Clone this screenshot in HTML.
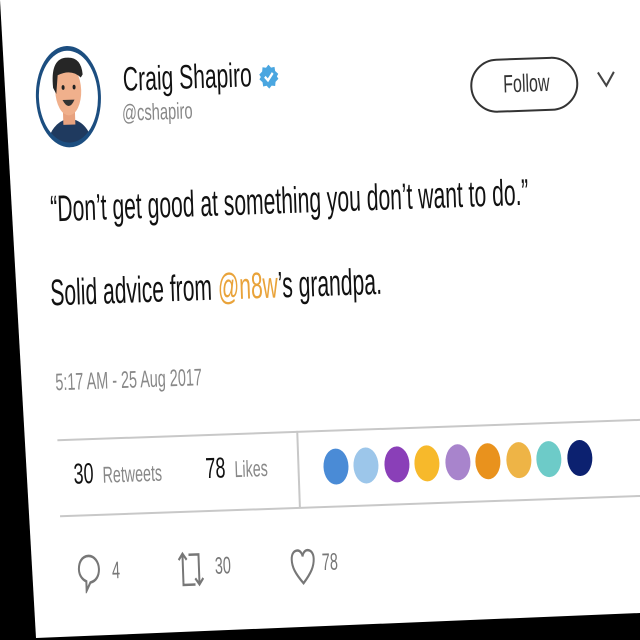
<!DOCTYPE html>
<html><head><meta charset="utf-8"><style>
*{margin:0;padding:0;box-sizing:border-box}
html,body{width:640px;height:640px;overflow:hidden;background:#000}
.card{position:absolute;left:0;top:0;width:640px;height:640px;background:#fff;clip-path:polygon(0 0,640px 0,640px 613px,36px 638px)}
.c{position:absolute;left:0;top:0;width:700px;height:640px;transform:rotate(-2deg);transform-origin:0 0;font-family:"Liberation Sans",sans-serif}
.t{position:absolute;white-space:nowrap;transform-origin:0 50%}
.line{position:absolute;height:2px;background:#c8c8c8}
.dot{position:absolute;width:25px;height:36px;border-radius:50%}
</style></head><body>
<div class="card"><div class="c">
<svg style="position:absolute;left:31px;top:46px" width="68" height="106" viewBox="0 0 68 68" preserveAspectRatio="none">
<defs><clipPath id="cc"><circle cx="34" cy="34" r="30"/></clipPath></defs>
<circle cx="34" cy="34" r="31" fill="#fff"/>
<g clip-path="url(#cc)">
<path d="M10 68 Q14 50 34 48 Q54 50 58 68Z" fill="#1f3a5f"/>
<rect x="28" y="40" width="12" height="12" fill="#e8a27f"/>
<ellipse cx="34" cy="30" rx="13" ry="16" fill="#f0b08c"/>
<path d="M19 28 Q17 10 32 9 Q48 8 49 20 L47 22 Q38 16 24 20 L22 32Z" fill="#262626"/>
<path d="M28 36 Q34 44 40 36Z" fill="#333"/>
<circle cx="29" cy="28" r="1.5" fill="#222"/><circle cx="40" cy="28" r="1.5" fill="#222"/>
</g>
<circle cx="34" cy="34" r="31" fill="none" stroke="#1c4e80" stroke-width="3"/>
</svg>
<div class="t" style="left:120px;top:66px;font-size:34px;line-height:36px;color:#111;transform:scaleX(.62)">Craig Shapiro</div>
<svg style="position:absolute;left:256px;top:74px" width="20" height="24" viewBox="0 0 20 20" preserveAspectRatio="none"><path d="M10 0 L12.5 2.5 L16 2 L16.5 5.5 L19.5 8 L18 10 L19.5 12 L16.5 14.5 L16 18 L12.5 17.5 L10 20 L7.5 17.5 L4 18 L3.5 14.5 L0.5 12 L2 10 L0.5 8 L3.5 5.5 L4 2 L7.5 2.5Z" fill="#4aa6e0"/><path d="M6 10 L9 13 L14 7" fill="none" stroke="#fff" stroke-width="2.2"/></svg>
<div class="t" style="left:118px;top:104px;font-size:23px;line-height:26px;color:#888;transform:scaleX(.64)">@cshapiro</div>
<div style="position:absolute;left:467px;top:76px;width:108px;height:54px;border:2.5px solid #333;border-radius:27px"></div>
<div class="t" style="left:500px;top:88px;font-size:25px;line-height:28px;color:#333;transform:scaleX(.64)">Follow</div>
<svg style="position:absolute;left:593px;top:91px" width="20" height="18" viewBox="0 0 20 16" preserveAspectRatio="none"><path d="M2 2 L10 14 L18 2" fill="none" stroke="#444" stroke-width="2"/></svg>
<div class="t" style="left:43px;top:191px;font-size:37px;line-height:40px;color:#111;transform:scaleX(.57)">“Don’t get good at something you don’t want to do.”</div>
<div class="t" style="left:40px;top:275px;font-size:37px;line-height:40px;color:#111;transform:scaleX(.57)">Solid advice from <span style="color:#e9a33a">@n8w</span>’s grandpa.</div>
<div class="t" style="left:42px;top:372px;font-size:24px;line-height:26px;color:#888;transform:scaleX(.6)">5:17 AM - 25 Aug 2017</div>
<div class="line" style="left:42px;top:441px;width:620px"></div>
<div class="line" style="left:42px;top:517px;width:620px"></div>
<div style="position:absolute;left:281px;top:441px;width:2px;height:77px;background:#c8c8c8"></div>
<div class="t" style="left:57px;top:462px;font-size:29px;line-height:30px;color:#111;transform:scaleX(.62)">30 <span style="font-size:23px;color:#888">&nbsp;Retweets</span></div>
<div class="t" style="left:189px;top:461px;font-size:29px;line-height:30px;color:#111;transform:scaleX(.62)">78 <span style="font-size:23px;color:#888">&nbsp;Likes</span></div>
<div class="dot" style="left:307px;top:460px;background:#4a8bd6"></div>
<div class="dot" style="left:337px;top:460px;background:#9cc6ea"></div>
<div class="dot" style="left:368px;top:460px;background:#8a3fb8"></div>
<div class="dot" style="left:398px;top:460px;background:#f7b92b"></div>
<div class="dot" style="left:429px;top:460px;background:#a884cc"></div>
<div class="dot" style="left:459px;top:460px;background:#e9921d"></div>
<div class="dot" style="left:490px;top:460px;background:#eeb446"></div>
<div class="dot" style="left:520px;top:460px;background:#6dcbc8"></div>
<div class="dot" style="left:551px;top:460px;background:#0c2170"></div>
<svg style="position:absolute;left:57px;top:556px" width="24" height="40" viewBox="0 0 24 30" preserveAspectRatio="none"><path d="M12 2 C5 2 2 7 2 12 C2 17 6 20 9 21 L9 28 L13 22 C19 21 22 17 22 12 C22 7 18 2 12 2Z" fill="none" stroke="#777" stroke-width="2"/></svg>
<div class="t" style="left:92px;top:562px;font-size:24px;line-height:26px;color:#777;transform:scaleX(.6)">4</div>
<svg style="position:absolute;left:157px;top:556px" width="30" height="40" viewBox="0 0 30 32" preserveAspectRatio="none"><path d="M6 26 V4 M2 8 L6 3 L10 8" fill="none" stroke="#777" stroke-width="2"/><path d="M12 4 H22 V27 M18 23 L22 28 L26 23 M6 26 V28 H18" fill="none" stroke="#777" stroke-width="2"/></svg>
<div class="t" style="left:195px;top:561px;font-size:24px;line-height:26px;color:#777;transform:scaleX(.6)">30</div>
<svg style="position:absolute;left:270px;top:558px" width="26" height="38" viewBox="0 0 26 30" preserveAspectRatio="none"><path d="M13 28 C5 20 2 15 2 9 C2 4 5 2 8 2 C11 2 13 5 13 7 C13 5 15 2 18 2 C21 2 24 4 24 9 C24 15 21 20 13 28Z" fill="none" stroke="#777" stroke-width="2"/></svg>
<div class="t" style="left:302px;top:561px;font-size:24px;line-height:26px;color:#777;transform:scaleX(.6)">78</div>
</div></div>
</body></html>
